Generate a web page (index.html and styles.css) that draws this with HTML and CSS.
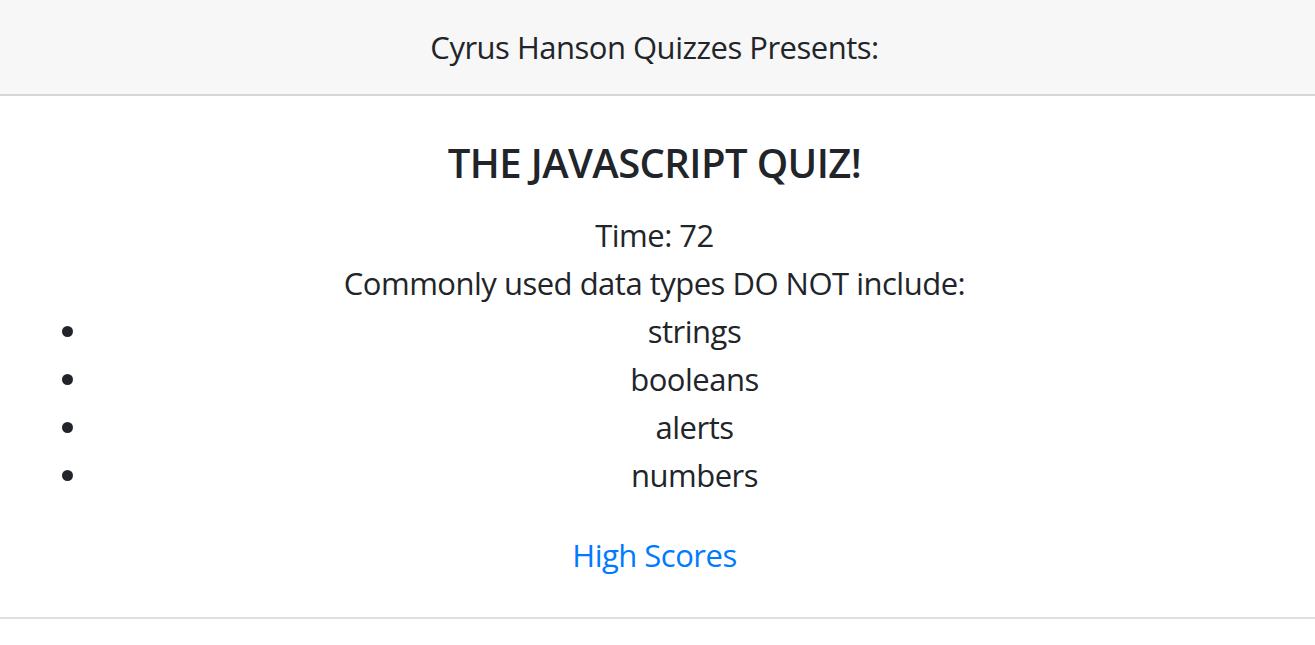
FILE: index.html
```html
<!DOCTYPE html>
<html lang="en">
<head>
<meta charset="utf-8">
<title>The JavaScript Quiz</title>
<link rel="stylesheet" href="styles.css">
</head>
<body>
<header class="site-header">Cyrus Hanson Quizzes Presents:</header>
<main class="quiz">
  <h1 class="quiz-title">THE JAVASCRIPT QUIZ!</h1>
  <div class="timer">Time: 72</div>
  <div class="question">Commonly used data types DO NOT include:</div>
  <ul class="choices">
    <li>strings</li>
    <li>booleans</li>
    <li>alerts</li>
    <li>numbers</li>
  </ul>
  <div class="scores"><a class="scores-link" href="#">High Scores</a></div>
</main>
<footer class="site-footer"></footer>
</body>
</html>
```
FILE: styles.css
```css
html, body {
  margin: 0;
  padding: 0;
  background: #ffffff;
}
body {
  font-family: "Open Sans", "Noto Sans", sans-serif;
  font-size: 31px;
  line-height: 48px;
  letter-spacing: -0.5px;
  color: #212529;
}
.site-header {
  height: 94px;
  display: flex;
  align-items: center;
  justify-content: center;
  padding-right: 6px;
  background: #f7f7f7;
  border-bottom: 2px solid #d6d6d6;
}
.quiz {
  padding-top: 42px;
  padding-right: 6px;
  text-align: center;
}
.quiz-title {
  margin: 0 0 23px;
  font-size: 40px;
  line-height: 50px;
  letter-spacing: -0.6px;
  font-weight: 600;
}
.choices {
  margin: 0;
  padding: 0 11px 0 91px;
  list-style: disc;
}
.scores {
  margin-top: 32px;
  margin-bottom: 38px;
}
.scores-link {
  color: #007bff;
  text-decoration: none;
}
.site-footer {
  border-top: 2px solid #dfdfdf;
}
```
